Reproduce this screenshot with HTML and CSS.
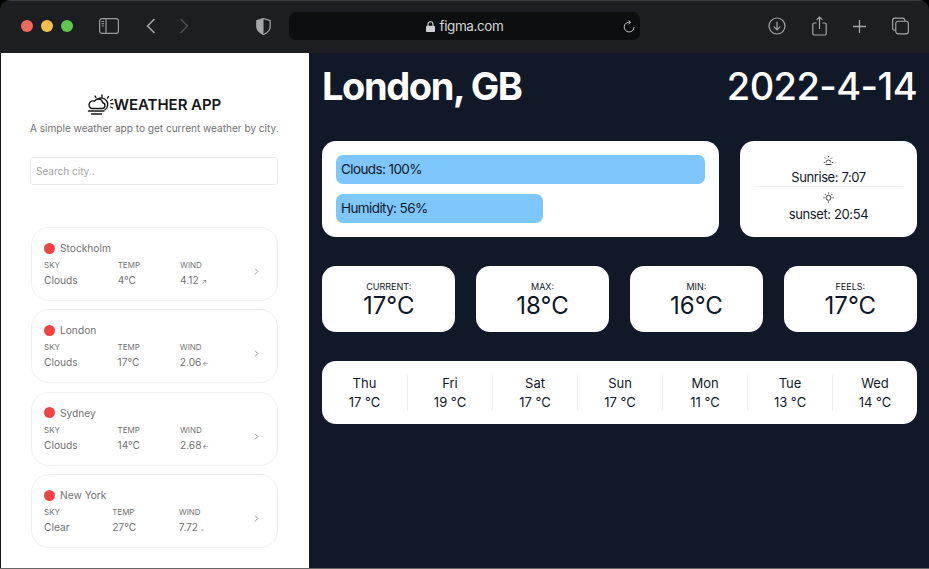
FILE: index.html
```html
<!DOCTYPE html>
<html lang="en">
<head>
<meta charset="utf-8">
<title>Weather App</title>
<link rel="stylesheet" href="styles.css">
</head>
<body>
<div class="window">
  <header class="toolbar">
    <div class="lights"><span class="light red"></span><span class="light yellow"></span><span class="light green"></span></div>
    <svg class="tb-icon sidebar-icon" width="20" height="16" viewBox="0 0 20 16" fill="none" stroke="#9a9b9d" stroke-width="1.2"><rect x=".6" y=".6" width="18.8" height="14.8" rx="2.5"/><path d="M7 .6v14.8"/><path d="M2.5 3.500h2.500M2.500 5.700h2.500M2.500 7.900h2.500" stroke-width="1"/></svg>
    <svg class="tb-icon back" width="10" height="16" viewBox="0 0 10 16" fill="none" stroke="#a8a9ab" stroke-width="1.5"><path d="M8.500 1 1.500 8l7 7"/></svg>
    <svg class="tb-icon forward" width="10" height="16" viewBox="0 0 10 16" fill="none" stroke="#4d4e51" stroke-width="1.5"><path d="M1.500 1l7 7-7 7"/></svg>
    <svg class="tb-icon shield" width="15" height="17" viewBox="0 0 15 17"><path d="M7.500.5 14.200 2.600v6c0 3.900-3.300 6.500-6.700 7.900C4.100 15.100.8 12.500.8 8.600v-6z" fill="none" stroke="#a5a6a8" stroke-width="1.200"/><path d="M7.500.5.800 2.600v6c0 3.900 3.300 6.500 6.700 7.900z" fill="#a5a6a8"/></svg>
    <div class="address">
      <svg class="lock" width="9" height="11" viewBox="0 0 9 11"><path d="M2 5V3.200a2.500 2.500 0 0 1 5 0V5" fill="none" stroke="#cfd0d1" stroke-width="1.100"/><rect y="4.700" width="9" height="6.300" rx="1" fill="#cfd0d1"/></svg>
      <span class="url">figma.com</span>
      <svg class="reload" width="12" height="13" viewBox="0 0 12 13" fill="none" stroke="#c4c5c6" stroke-width="1"><path d="M7.200 2.300A4.900 4.900 0 1 0 11 7"/><path d="M5.500.4 7.600 2.300 5.500 4.200"/></svg>
    </div>
    <div class="tb-right">
      <svg width="18" height="18" viewBox="0 0 18 18" fill="none" stroke="#a5a6a8" stroke-width="1.200"><circle cx="9" cy="9" r="8"/><path d="M9 4.800v8M5.800 9.600 9 12.800l3.200-3.200"/></svg>
      <svg width="15" height="20" viewBox="0 0 15 20" fill="none" stroke="#a5a6a8" stroke-width="1.200"><path d="M4.500 7H2.300A1.500 1.500 0 0 0 .8 8.500v9A1.500 1.500 0 0 0 2.300 19h10.400a1.500 1.500 0 0 0 1.500-1.500v-9A1.500 1.500 0 0 0 12.700 7h-2.200"/><path d="M7.500 13V1M4.700 3.700 7.500 1l2.800 2.700"/></svg>
      <svg width="13" height="13" viewBox="0 0 13 13" fill="none" stroke="#a5a6a8" stroke-width="1.300"><path d="M6.500 0v13M0 6.500h13"/></svg>
      <svg width="17" height="18" viewBox="0 0 18 18" fill="none" stroke="#a5a6a8" stroke-width="1.200"><path d="M3.800 13.500H3A2.400 2.400 0 0 1 .7 11.100V3A2.400 2.400 0 0 1 3 .7h8.100a2.400 2.400 0 0 1 2.400 2.300v.8"/><rect x="4" y="4" width="13.300" height="13.300" rx="2.500"/></svg>
    </div>
  </header>
  <div class="content">
    <aside class="sidebar">
      <div class="brand">
        <svg class="logo" width="27" height="22" viewBox="0 0 27 22" fill="none" stroke="#17181a" stroke-width="1.400" stroke-linecap="round"><path d="M4.500 14.500h10.800a2.900 2.900 0 0 0 .5-5.700A4.500 4.500 0 0 0 7.500 7.200 3.700 3.700 0 0 0 4.500 14.500z"/><path d="M10.500 5.200A5.200 5.200 0 1 1 18 15.800"/><path d="M1.500 17h15.500M4.500 20h10M15 1v2.200M8 2l1 1.700M21.500 2.500l-1 1.600M26 9.800h-2M25.500 5.500l-1.800 1M25.500 14l-1.800-1"/></svg>
        <h1 class="brand-title">WEATHER APP</h1>
      </div>
      <p class="tagline">A simple weather app to get current weather by city.</p>
      <div class="search">Search city..</div>
      <ul class="cities">
        <li class="city">
          <div class="city-body mid">
            <div class="city-name"><span class="dot"></span>Stockholm</div>
            <div class="stats">
              <div class="stat"><span class="stat-label">SKY</span><span class="stat-value">Clouds</span></div>
              <div class="stat"><span class="stat-label">TEMP</span><span class="stat-value">4°C</span></div>
              <div class="stat"><span class="stat-label">WIND</span><span class="stat-value">4.12 <small class="wind">↗</small></span></div>
            </div>
          </div>
          <svg class="chevron" width="5" height="7" viewBox="0 0 5 7" fill="none" stroke="#a3a3a3" stroke-width="1"><path d="M.8.5l3 3-3 3"/></svg>
        </li>
        <li class="city">
          <div class="city-body">
            <div class="city-name"><span class="dot"></span>London</div>
            <div class="stats">
              <div class="stat"><span class="stat-label">SKY</span><span class="stat-value">Clouds</span></div>
              <div class="stat"><span class="stat-label">TEMP</span><span class="stat-value">17°C</span></div>
              <div class="stat"><span class="stat-label">WIND</span><span class="stat-value tight">2.06 <small class="wind">←</small></span></div>
            </div>
          </div>
          <svg class="chevron" width="5" height="7" viewBox="0 0 5 7" fill="none" stroke="#a3a3a3" stroke-width="1"><path d="M.8.5l3 3-3 3"/></svg>
        </li>
        <li class="city">
          <div class="city-body">
            <div class="city-name"><span class="dot"></span>Sydney</div>
            <div class="stats">
              <div class="stat"><span class="stat-label">SKY</span><span class="stat-value">Clouds</span></div>
              <div class="stat"><span class="stat-label">TEMP</span><span class="stat-value">14°C</span></div>
              <div class="stat"><span class="stat-label">WIND</span><span class="stat-value tight">2.68 <small class="wind">←</small></span></div>
            </div>
          </div>
          <svg class="chevron" width="5" height="7" viewBox="0 0 5 7" fill="none" stroke="#a3a3a3" stroke-width="1"><path d="M.8.5l3 3-3 3"/></svg>
        </li>
        <li class="city">
          <div class="city-body narrow">
            <div class="city-name"><span class="dot"></span>New York</div>
            <div class="stats">
              <div class="stat"><span class="stat-label">SKY</span><span class="stat-value">Clear</span></div>
              <div class="stat"><span class="stat-label">TEMP</span><span class="stat-value">27°C</span></div>
              <div class="stat"><span class="stat-label">WIND</span><span class="stat-value">7.72 <small class="wind tiny">↙</small></span></div>
            </div>
          </div>
          <svg class="chevron" width="5" height="7" viewBox="0 0 5 7" fill="none" stroke="#a3a3a3" stroke-width="1"><path d="M.8.5l3 3-3 3"/></svg>
        </li>
      </ul>
    </aside>
    <main class="main">
      <div class="headline"><h2 class="place">London, GB</h2><div class="date">2022-4-14</div></div>
      <section class="top-row">
        <div class="card bars">
          <div class="bar full">Clouds: 100%</div>
          <div class="bar" style="width:56%">Humidity: 56%</div>
        </div>
        <div class="card sun">
          <div class="sun-item">
            <svg width="11" height="11" viewBox="0 0 11 11" fill="none" stroke="#333" stroke-width=".9"><path d="M3 7.500a2.500 2.500 0 1 1 5 0M5.500 .8v1.400M2 2.600l1 1M9 2.600l-1 1M.8 7.500h1.200M9 7.500h1.200M2.500 9.500h6"/></svg>
            <span>Sunrise: 7:07</span>
          </div>
          <div class="sun-item sunset">
            <svg width="11" height="11" viewBox="0 0 11 11" fill="none" stroke="#333" stroke-width=".9"><circle cx="5.500" cy="5.800" r="2.500"/><path d="M5.500 .5v1.300M1.700 2l1 1M9.300 2l-1 1M.3 5.800h1.300M9.400 5.800h1.300M5.500 9.500v1.300"/></svg>
            <span>sunset: 20:54</span>
          </div>
        </div>
      </section>
      <section class="temps">
        <div class="card temp"><span class="temp-label">CURRENT:</span><span class="temp-value">17°C</span></div>
        <div class="card temp"><span class="temp-label">MAX:</span><span class="temp-value">18°C</span></div>
        <div class="card temp"><span class="temp-label">MIN:</span><span class="temp-value">16°C</span></div>
        <div class="card temp"><span class="temp-label">FEELS:</span><span class="temp-value">17°C</span></div>
      </section>
      <section class="card forecast">
        <div class="day"><span>Thu</span><span>17 °C</span></div>
        <div class="day"><span>Fri</span><span>19 °C</span></div>
        <div class="day"><span>Sat</span><span>17 °C</span></div>
        <div class="day"><span>Sun</span><span>17 °C</span></div>
        <div class="day"><span>Mon</span><span>11 °C</span></div>
        <div class="day"><span>Tue</span><span>13 °C</span></div>
        <div class="day"><span>Wed</span><span>14 °C</span></div>
      </section>
    </main>
  </div>
</div>
</body>
</html>
```
FILE: styles.css
```css
* { box-sizing: border-box; }
html, body { margin: 0; padding: 0; height: 100%; background: #000; overflow: hidden; }
body { font-family: Inter, "Liberation Sans", sans-serif; }
h1, h2, p, ul { margin: 0; padding: 0; }
ul { list-style: none; }

.window {
  width: 929px;
  height: 569px;
  display: flex;
  flex-direction: column;
  background: #1d1e21;
  border-radius: 10px 10px 0 0;
  border-bottom: 1px solid #666;
  overflow: hidden;
}

.toolbar {
  height: 53px;
  flex: none;
  display: flex;
  align-items: center;
  padding: 0 20px 2px 21px;
  background: #1d1e21;
  border-top: 1px solid #3a3b3d;
}
.lights { display: flex; gap: 8px; }
.light { width: 12px; height: 12px; border-radius: 50%; }
.red { background: #ed6a5f; }
.yellow { background: #f4be4f; }
.green { background: #61c554; }
.tb-icon { flex: none; }
.sidebar-icon { margin-left: 26px; }
.back { margin-left: 27px; }
.forward { margin-left: 23px; }
.shield { margin-left: 67px; }
.address {
  position: relative;
  width: 351px;
  height: 28px;
  margin-left: 18px;
  display: flex;
  align-items: center;
  justify-content: center;
  gap: 5px;
  border-radius: 7px;
  background: #0c0e10;
}
.url { font-size: 13.500px; letter-spacing: -.4px; color: #d4d5d6; }
.reload { position: absolute; right: 5px; top: 8px; }
.tb-right { margin-left: auto; display: flex; align-items: center; gap: 26px; }

.content { flex: 1; min-height: 0; display: flex; padding-left: 1px; background: #141820; }
.sidebar {
  width: 308px;
  flex: none;
  background: #fff;
  padding: 40px 31px 0 29px;
}
.brand { display: flex; justify-content: center; align-items: center; height: 24px; }
.brand-title { font-size: 15px; line-height: 24px; font-weight: 600; letter-spacing: -.05px; color: #17181a; }
.tagline { margin-top: 4px; font-size: 10.100px; line-height: 14px; letter-spacing: -.02px; color: #737373; text-align: center; white-space: nowrap; }
.search {
  margin-top: 22px;
  height: 28px;
  padding: 0 5px;
  border: 1px solid #e8eaed;
  border-radius: 3px;
  font-size: 10px;
  line-height: 26px;
  color: #a3a3a3;
}
.cities { margin-top: 42px; display: flex; flex-direction: column; gap: 8.400px; }
.city {
  height: 74px;
  margin-left: 1px;
  padding: 13px 18px 0 12px;
  display: flex;
  align-items: flex-start;
  justify-content: space-between;
  border: 1px solid #eef0f2;
  border-radius: 18px;
}
.city-body { width: 165px; }
.city-body.mid { width: 163px; }
.city-body.narrow { width: 160px; }
.city-name { display: flex; align-items: center; gap: 5px; font-size: 10.200px; line-height: 14px; color: #737373; }
.dot { width: 11px; height: 11px; border-radius: 50%; background: #ef4444; }
.stats { margin-top: 5px; display: flex; justify-content: space-between; }
.stat { display: flex; flex-direction: column; color: #737373; }
.stat-label { font-size: 8px; line-height: 11px; }
.stat-value { font-size: 10.200px; line-height: 19px; white-space: nowrap; }
.stat-value.tight { word-spacing: -2px; }
.wind { font-size: 7px; }
.wind.tiny { font-size: 4px; }
.chevron { flex: none; margin-top: 27px; }

.main { flex: 1; min-width: 0; padding: 13px 12px 0 13px; background: #111827; }
.headline { display: flex; justify-content: space-between; align-items: center; height: 40px; }
.place { font-size: 38px; line-height: 40px; font-weight: 700; color: #fff; letter-spacing: -1.400px; }
.date { font-size: 38px; line-height: 40px; font-weight: 500; color: #fff; letter-spacing: -.6px; }
.card { background: #fff; border-radius: 14px; color: #111827; }
.top-row { margin-top: 35px; display: flex; justify-content: space-between; height: 96px; }
.bars { width: 397px; padding: 14px; display: flex; flex-direction: column; gap: 10px; }
.bar {
  height: 29px;
  padding: 0 5px;
  border-radius: 7px;
  background: #7dc7fd;
  font-size: 13.500px;
  letter-spacing: -.6px;
  line-height: 29px;
  white-space: nowrap;
}
.full { width: 100%; }
.sun { width: 177px; padding: 13px 14px 0; display: flex; flex-direction: column; }
.sun-item { display: flex; flex-direction: column; align-items: center; font-size: 13px; letter-spacing: -.4px; line-height: 18px; }
.sun-item svg { display: block; height: 13px; margin-bottom: 1px; }
.sunset { border-top: 1px solid #f0f1f2; padding-top: 4px; }
.temps { margin-top: 29px; display: grid; grid-template-columns: repeat(4, 1fr); gap: 20.500px; }
.temp { height: 66px; display: flex; flex-direction: column; align-items: center; justify-content: center; }
.temp-label { font-size: 9px; line-height: 12px; margin-top: 2px; }
.temp-value { font-size: 24px; line-height: 26px; }
.forecast { margin-top: 29px; height: 63px; display: grid; grid-template-columns: repeat(7, 1fr); align-items: center; }
.day {
  display: flex;
  flex-direction: column;
  align-items: center;
  height: 36px;
  font-size: 13px;
  line-height: 18px;
  border-left: 1px solid #eef0f2;
}
.day span:first-child { margin-top: -1px; margin-bottom: 1px; }
.day:first-child { border-left: 0; }
```
